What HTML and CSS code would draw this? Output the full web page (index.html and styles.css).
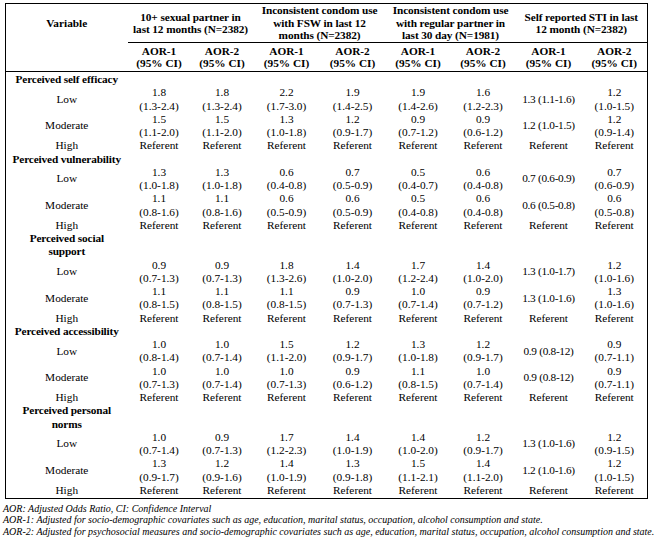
FILE: index.html
```html
<!DOCTYPE html>
<html>
<head>
<meta charset="utf-8">
<link rel="stylesheet" href="styles.css">
</head>
<body>
<table class="stats">
<colgroup>
<col class="c-var"><col class="c-a"><col class="c-a"><col class="c-b"><col class="c-b"><col class="c-c"><col class="c-c"><col class="c-d"><col class="c-d">
</colgroup>
<thead>
<tr class="hrow1">
<th class="var-head">Variable</th>
<th colspan="2" class="group">10+ sexual partner in<br>last 12 months (N=2382)</th>
<th colspan="2" class="group">Inconsistent condom use<br>with FSW in last 12<br>months (N=2382)</th>
<th colspan="2" class="group">Inconsistent condom use<br>with regular partner in<br>last 30 day (N=1981)</th>
<th colspan="2" class="group">Self reported STI in last<br>12 month (N=2382)</th>
</tr>
<tr class="hrow2">
<th></th>
<th>AOR-1<br>(95% CI)</th><th>AOR-2<br>(95% CI)</th>
<th>AOR-1<br>(95% CI)</th><th>AOR-2<br>(95% CI)</th>
<th>AOR-1<br>(95% CI)</th><th>AOR-2<br>(95% CI)</th>
<th>AOR-1<br>(95% CI)</th><th>AOR-2<br>(95% CI)</th>
</tr>
</thead>
<tbody>
<tr class="cat first"><td class="label">Perceived self efficacy</td><td></td><td></td><td></td><td></td><td></td><td></td><td></td><td></td></tr>
<tr><td class="level">Low</td><td>1.8<br>(1.3-2.4)</td><td>1.8<br>(1.3-2.4)</td><td>2.2<br>(1.7-3.0)</td><td>1.9<br>(1.4-2.5)</td><td>1.9<br>(1.4-2.6)</td><td>1.6<br>(1.2-2.3)</td><td class="one">1.3 (1.1-1.6)</td><td>1.2<br>(1.0-1.5)</td></tr>
<tr><td class="level">Moderate</td><td>1.5<br>(1.1-2.0)</td><td>1.5<br>(1.1-2.0)</td><td>1.3<br>(1.0-1.8)</td><td>1.2<br>(0.9-1.7)</td><td>0.9<br>(0.7-1.2)</td><td>0.9<br>(0.6-1.2)</td><td class="one">1.2 (1.0-1.5)</td><td>1.2<br>(0.9-1.4)</td></tr>
<tr><td class="level">High</td><td>Referent</td><td>Referent</td><td>Referent</td><td>Referent</td><td>Referent</td><td>Referent</td><td>Referent</td><td>Referent</td></tr>

<tr class="cat"><td class="label">Perceived vulnerability</td><td></td><td></td><td></td><td></td><td></td><td></td><td></td><td></td></tr>
<tr><td class="level">Low</td><td>1.3<br>(1.0-1.8)</td><td>1.3<br>(1.0-1.8)</td><td>0.6<br>(0.4-0.8)</td><td>0.7<br>(0.5-0.9)</td><td>0.5<br>(0.4-0.7)</td><td>0.6<br>(0.4-0.8)</td><td class="one">0.7 (0.6-0.9)</td><td>0.7<br>(0.6-0.9)</td></tr>
<tr><td class="level">Moderate</td><td>1.1<br>(0.8-1.6)</td><td>1.1<br>(0.8-1.6)</td><td>0.6<br>(0.5-0.9)</td><td>0.6<br>(0.5-0.9)</td><td>0.5<br>(0.4-0.8)</td><td>0.6<br>(0.4-0.8)</td><td class="one">0.6 (0.5-0.8)</td><td>0.6<br>(0.5-0.8)</td></tr>
<tr><td class="level">High</td><td>Referent</td><td>Referent</td><td>Referent</td><td>Referent</td><td>Referent</td><td>Referent</td><td>Referent</td><td>Referent</td></tr>

<tr class="cat"><td class="label">Perceived social<br>support</td><td></td><td></td><td></td><td></td><td></td><td></td><td></td><td></td></tr>
<tr><td class="level">Low</td><td>0.9<br>(0.7-1.3)</td><td>0.9<br>(0.7-1.3)</td><td>1.8<br>(1.3-2.6)</td><td>1.4<br>(1.0-2.0)</td><td>1.7<br>(1.2-2.4)</td><td>1.4<br>(1.0-2.0)</td><td class="one">1.3 (1.0-1.7)</td><td>1.2<br>(1.0-1.6)</td></tr>
<tr><td class="level">Moderate</td><td>1.1<br>(0.8-1.5)</td><td>1.1<br>(0.8-1.5)</td><td>1.1<br>(0.8-1.5)</td><td>0.9<br>(0.7-1.3)</td><td>1.0<br>(0.7-1.4)</td><td>0.9<br>(0.7-1.2)</td><td class="one">1.3 (1.0-1.6)</td><td>1.3<br>(1.0-1.6)</td></tr>
<tr><td class="level">High</td><td>Referent</td><td>Referent</td><td>Referent</td><td>Referent</td><td>Referent</td><td>Referent</td><td>Referent</td><td>Referent</td></tr>

<tr class="cat"><td class="label">Perceived accessibility</td><td></td><td></td><td></td><td></td><td></td><td></td><td></td><td></td></tr>
<tr><td class="level">Low</td><td>1.0<br>(0.8-1.4)</td><td>1.0<br>(0.7-1.4)</td><td>1.5<br>(1.1-2.0)</td><td>1.2<br>(0.9-1.7)</td><td>1.3<br>(1.0-1.8)</td><td>1.2<br>(0.9-1.7)</td><td class="one">0.9 (0.8-12)</td><td>0.9<br>(0.7-1.1)</td></tr>
<tr><td class="level">Moderate</td><td>1.0<br>(0.7-1.3)</td><td>1.0<br>(0.7-1.4)</td><td>1.0<br>(0.7-1.3)</td><td>0.9<br>(0.6-1.2)</td><td>1.1<br>(0.8-1.5)</td><td>1.0<br>(0.7-1.4)</td><td class="one">0.9 (0.8-12)</td><td>0.9<br>(0.7-1.1)</td></tr>
<tr><td class="level">High</td><td>Referent</td><td>Referent</td><td>Referent</td><td>Referent</td><td>Referent</td><td>Referent</td><td>Referent</td><td>Referent</td></tr>

<tr class="cat"><td class="label">Perceived personal<br>norms</td><td></td><td></td><td></td><td></td><td></td><td></td><td></td><td></td></tr>
<tr><td class="level">Low</td><td>1.0<br>(0.7-1.4)</td><td>0.9<br>(0.7-1.3)</td><td>1.7<br>(1.2-2.3)</td><td>1.4<br>(1.0-1.9)</td><td>1.4<br>(1.0-2.0)</td><td>1.2<br>(0.9-1.7)</td><td class="one">1.3 (1.0-1.6)</td><td>1.2<br>(0.9-1.5)</td></tr>
<tr><td class="level">Moderate</td><td>1.3<br>(0.9-1.7)</td><td>1.2<br>(0.9-1.6)</td><td>1.4<br>(1.0-1.9)</td><td>1.3<br>(0.9-1.8)</td><td>1.5<br>(1.1-2.1)</td><td>1.4<br>(1.1-2.0)</td><td class="one">1.2 (1.0-1.6)</td><td>1.2<br>(1.0-1.5)</td></tr>
<tr class="last"><td class="level">High</td><td>Referent</td><td>Referent</td><td>Referent</td><td>Referent</td><td>Referent</td><td>Referent</td><td>Referent</td><td>Referent</td></tr>
</tbody>
</table>
<div class="notes">
<p>AOR: Adjusted Odds Ratio, CI: Confidence Interval</p>
<p>AOR-1: Adjusted for socio-demographic covariates such as age, education, marital status, occupation, alcohol consumption and state.</p>
<p>AOR-2: Adjusted for psychosocial measures and socio-demographic covariates such as age, education, marital status, occupation, alcohol consumption and state.</p>
</div>
</body>
</html>
```
FILE: styles.css
```css
html, body {
  margin: 0;
  background: #fff;
}
body {
  padding: 3px 0 0 5px;
  font-family: "Liberation Serif", "Times New Roman", serif;
  font-size: 11.3px;
  color: #000;
}
.stats {
  border-collapse: collapse;
  table-layout: fixed;
  width: 643px;
  border: 1px solid #000;
}
.c-var { width: 122px; }
.c-a { width: 63px; }
.c-b { width: 66px; }
.c-c { width: 65px; }
.c-d { width: 66px; }

.stats th,
.stats td {
  padding: 0;
  text-align: center;
  vertical-align: middle;
  line-height: 13.25px;
  white-space: nowrap;
}
.stats th {
  font-weight: bold;
}
.hrow1 th {
  height: 38px;
  line-height: 12.5px;
}
.hrow1 .group {
  border-bottom: 1px solid #000;
  letter-spacing: -0.1px;
}
.var-head {
  padding-top: 2px;
}
.hrow2 th {
  height: 27px;
  line-height: 11.5px;
  padding-top: 1px;
  border-bottom: 1px solid #000;
}
.first td {
  padding-top: 1px;
}
.last td {
  padding-bottom: 1px;
}
.label {
  font-weight: bold;
  letter-spacing: -0.15px;
}
.one {
  letter-spacing: -0.3px;
}
.notes {
  margin: 4px 0 0 -2px;
  font-style: italic;
  font-size: 10px;
  line-height: 11.3px;
  white-space: nowrap;
}
.notes p {
  margin: 0;
}
```
